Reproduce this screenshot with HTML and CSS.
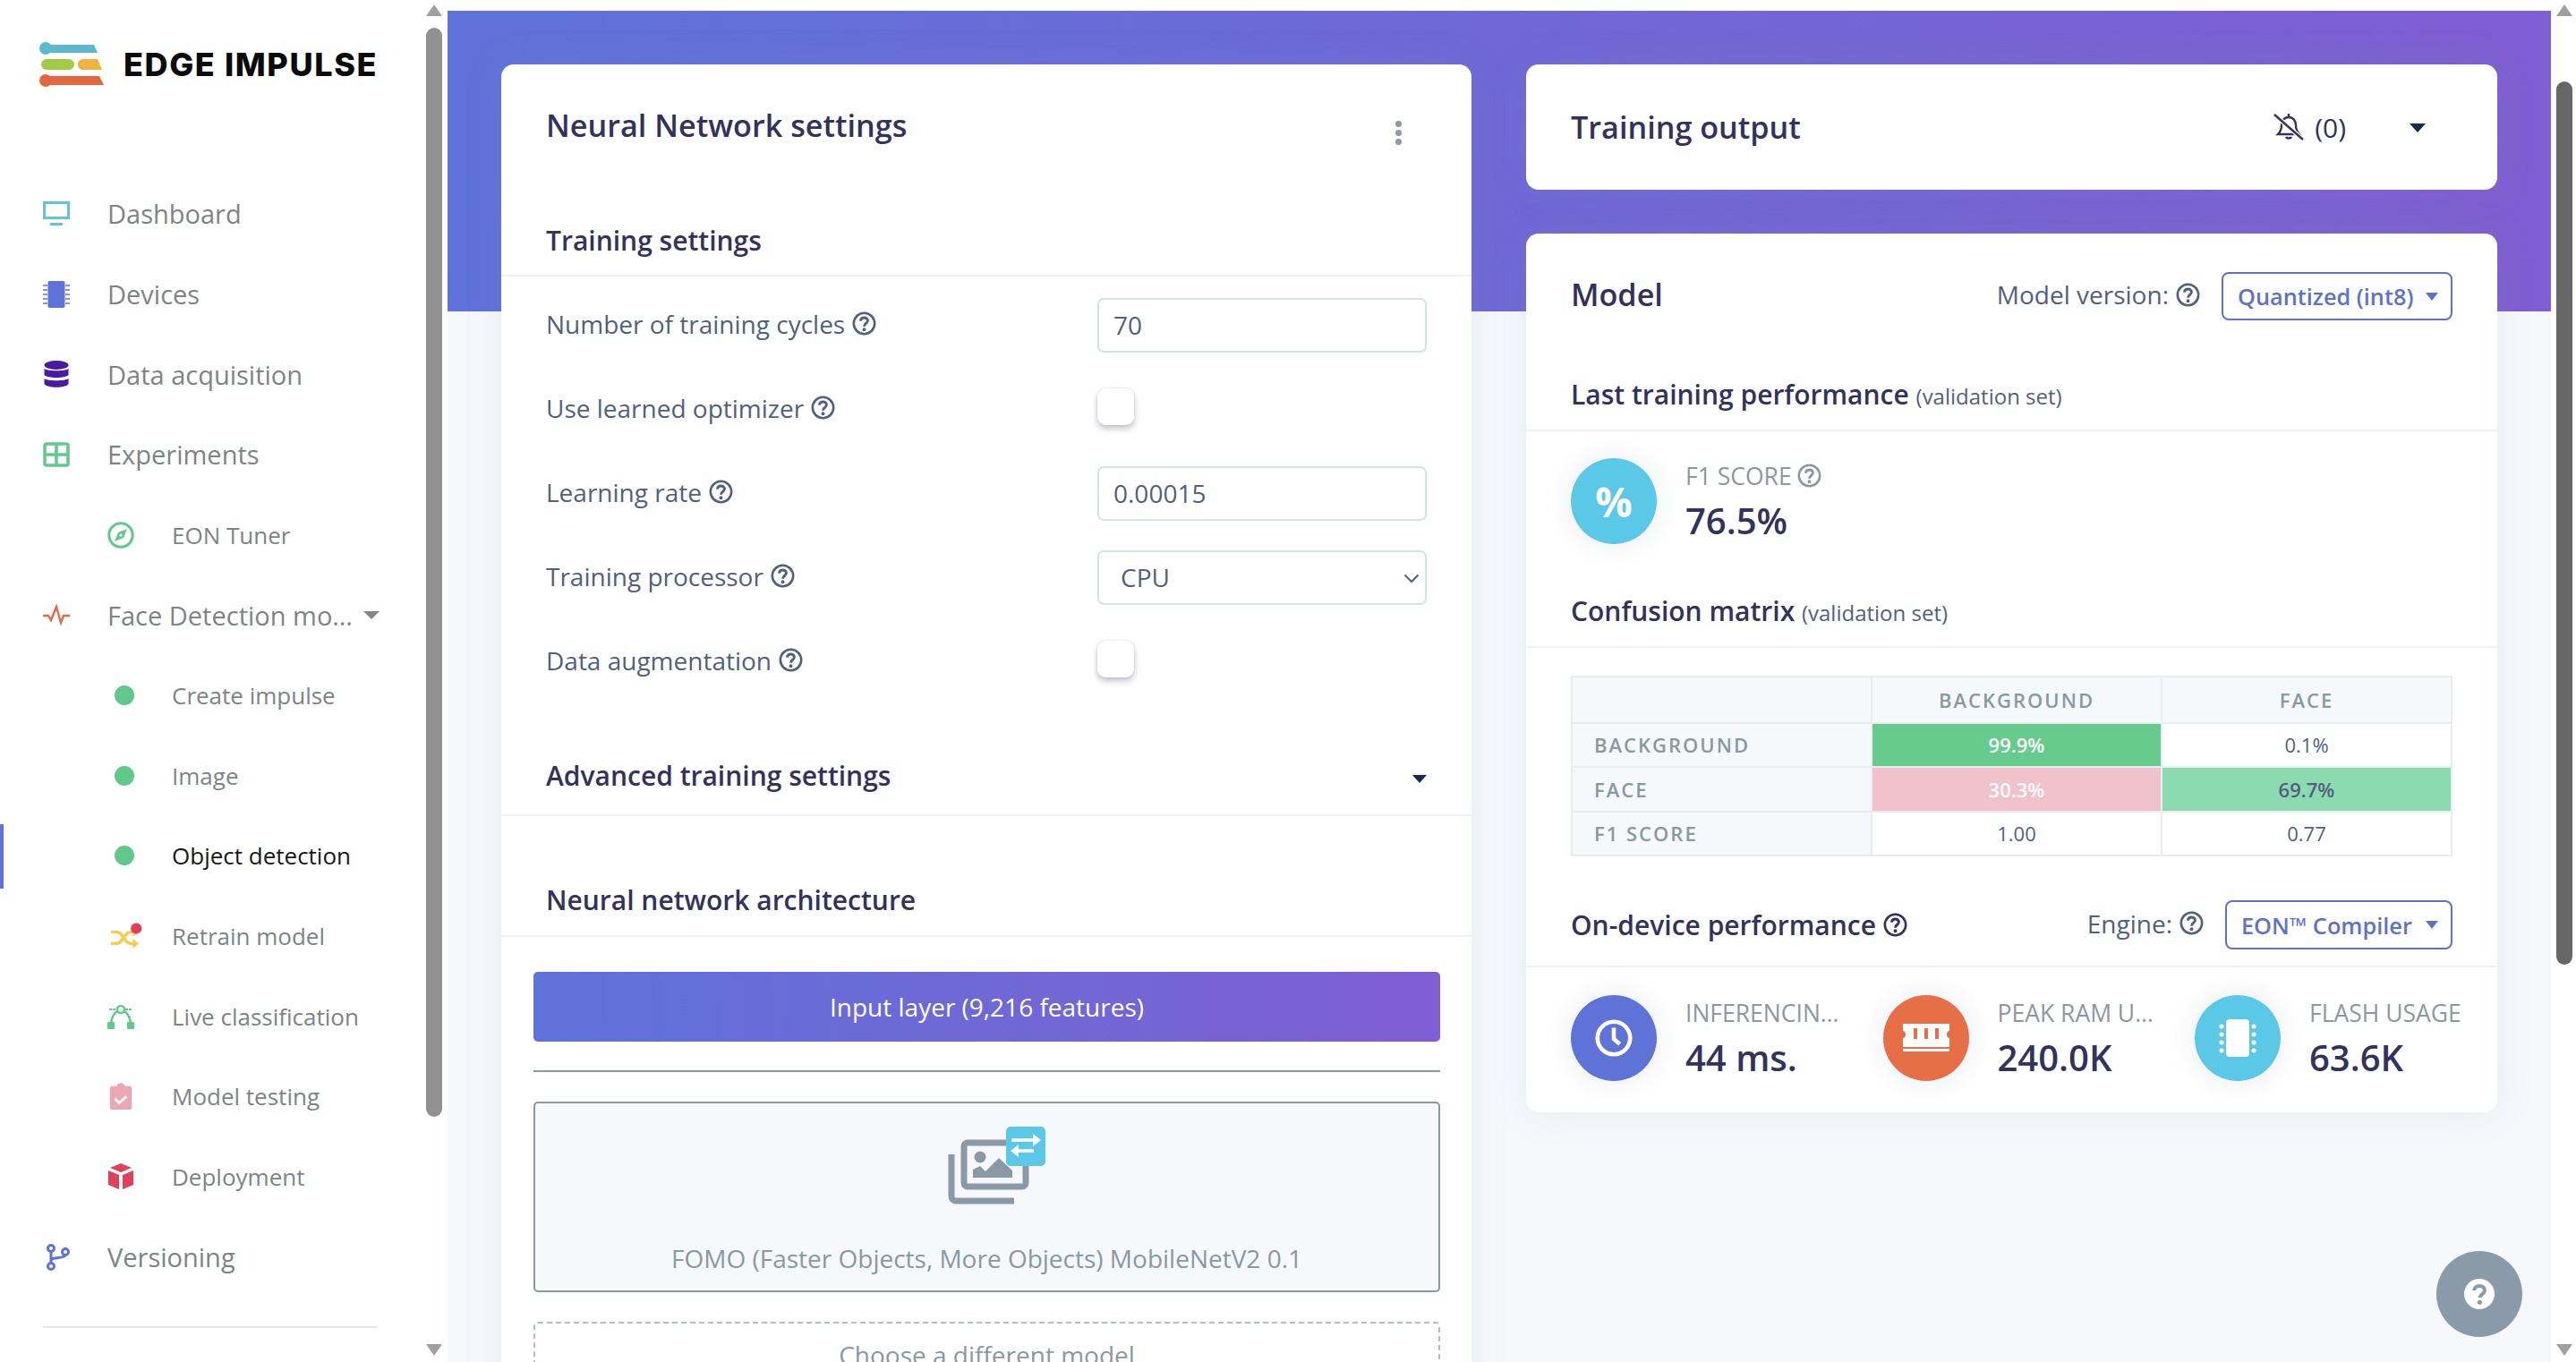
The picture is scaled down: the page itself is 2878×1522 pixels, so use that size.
FILE: index.html
```html
<!DOCTYPE html>
<html lang="en">
<head>
    <meta charset="UTF-8">
    <title>Edge Impulse - Object detection</title>
    <link rel="stylesheet" href="styles.css">
</head>
<body>
    <svg class="defs" width="0" height="0">
        <symbol id="help" viewBox="0 0 24 24">
            <circle cx="12" cy="12" r="10.4" fill="none" stroke="currentColor" stroke-width="2.300"/>
            <path d="M8.400 9.400c.2-2 1.700-3.200 3.600-3.200 2 0 3.500 1.300 3.500 3 0 2.800-3.500 2.800-3.500 5.600" fill="none" stroke="currentColor" stroke-width="2.600"/>
            <circle cx="12" cy="18" r="1.700" fill="currentColor"/>
        </symbol>
    </svg>

    <aside class="sidebar">
        <div class="side-content">
            <div class="logo">
                <svg class="logo-mark" width="74" height="50" viewBox="0 0 74 50">
                    <circle cx="7" cy="7" r="7" fill="#5cb8cd"/>
                    <path d="M7 3h54l4 9H7z" fill="#5cb8cd"/>
                    <rect x="2" y="19" width="37" height="12" rx="6" fill="#a3cb45"/>
                    <path d="M49 19h16l5 12H49c-3 0-6-2-6-6s3-6 6-6z" fill="#efb53f"/>
                    <circle cx="7" cy="43" r="7" fill="#e5673f"/>
                    <path d="M7 38h60l5 10H7z" fill="#e5673f"/>
                </svg>
                <span class="logo-text">EDGE IMPULSE</span>
            </div>
            <nav class="nav">
                <a class="nav-item">
                    <svg class="nav-icon" viewBox="0 0 30 28"><rect x="1.500" y="1.500" width="27" height="17" fill="none" stroke="#62c3de" stroke-width="3"/><rect x="8" y="24" width="14" height="3" fill="#62c3de"/></svg>
                    Dashboard
                </a>
                <a class="nav-item">
                    <svg class="nav-icon" viewBox="0 0 30 30"><rect x="5.500" y="0" width="19" height="30" rx="2" fill="#5f72d8"/><path d="M0 5h5M0 10h5M0 15h5M0 20h5M0 25h5M25 5h5M25 10h5M25 15h5M25 20h5M25 25h5" stroke="#5f72d8" stroke-width="1.600"/></svg>
                    Devices
                </a>
                <a class="nav-item">
                    <svg class="nav-icon" viewBox="0 0 30 30"><ellipse cx="15" cy="5" rx="13.500" ry="5" fill="#4a1ba0"/><path d="M1.500 9c3 3 24 3 27 0v7c-3 4-24 4-27 0zM1.500 20c3 3 24 3 27 0v6c-3 5-24 5-27 0z" fill="#4a1ba0"/></svg>
                    Data acquisition
                </a>
                <a class="nav-item">
                    <svg class="nav-icon" viewBox="0 0 30 28"><rect x="2" y="2" width="26" height="24" rx="2" fill="none" stroke="#62c98c" stroke-width="3.500"/><path d="M2 14h26M15 2v24" stroke="#62c98c" stroke-width="3.500"/></svg>
                    Experiments
                </a>
                <a class="nav-item nav-sub">
                    <svg class="nav-icon" viewBox="0 0 30 30"><circle cx="15" cy="15" r="13.200" fill="none" stroke="#62c98c" stroke-width="3"/><path d="M22 8l-4 10-10 4 4-10z" fill="#62c98c"/><circle cx="15" cy="15" r="1.600" fill="#fff"/></svg>
                    EON Tuner
                </a>
                <a class="nav-item">
                    <svg class="nav-icon" viewBox="0 0 30 24"><path d="M0 13h6l3 5 6-15 5 18 3-8h7" fill="none" stroke="#e4694a" stroke-width="2.400"/></svg>
                    <span class="nav-clip">Face Detection model</span>
                    <span class="caret caret-grey"></span>
                </a>
                <a class="nav-item nav-sub">
                    <span class="nav-dot"></span>
                    Create impulse
                </a>
                <a class="nav-item nav-sub">
                    <span class="nav-dot"></span>
                    Image
                </a>
                <a class="nav-item nav-sub active">
                    <span class="nav-dot"></span>
                    Object detection
                </a>
                <a class="nav-item nav-sub">
                    <svg class="nav-icon nav-icon-wide" viewBox="0 0 38 32">
                        <path d="M1 11h6c5 0 7 4 9 7s4 7 9 7h4M1 25h6c5 0 7-4 9-7s4-7 9-7h4" fill="none" stroke="#f0cf4b" stroke-width="3.600"/>
                        <path d="M27 5l7 6-7 6zM27 19l7 6-7 6z" fill="#f0cf4b"/>
                        <circle cx="31" cy="7" r="6.500" fill="#e2405a"/>
                    </svg>
                    Retrain model
                </a>
                <a class="nav-item nav-sub">
                    <svg class="nav-icon" viewBox="0 0 30 28">
                        <path d="M4 22C5 12 10 7 15 7s10 5 11 15" fill="none" stroke="#62c98c" stroke-width="2.600"/>
                        <path d="M2 6h8M20 6h8" stroke="#62c98c" stroke-width="1.800" stroke-dasharray="3 1"/>
                        <circle cx="15" cy="6" r="4" fill="#fff" stroke="#62c98c" stroke-width="2.400"/>
                        <rect x="0" y="20" width="8" height="8" rx="1" fill="#62c98c"/>
                        <rect x="22" y="20" width="8" height="8" rx="1" fill="#62c98c"/>
                    </svg>
                    Live classification
                </a>
                <a class="nav-item nav-sub">
                    <svg class="nav-icon" viewBox="0 0 30 32">
                        <path d="M5 4h5c1-5 9-5 10 0h5c2 0 3 1 3 3v22c0 2-1 3-3 3H5c-2 0-3-1-3-3V7c0-2 1-3 3-3z" fill="#eca7b5"/>
                        <path d="M8 19l5 5 9-8" fill="none" stroke="#fff" stroke-width="3"/>
                    </svg>
                    Model testing
                </a>
                <a class="nav-item nav-sub">
                    <svg class="nav-icon" viewBox="0 0 30 30">
                        <path d="M15 0l12 5-12 5L3 5z" fill="#e0405a"/>
                        <path d="M1 8l12 5v16L1 24zM29 8l-12 5v16l12-5z" fill="#e0405a"/>
                    </svg>
                    Deployment
                </a>
                <a class="nav-item">
                    <svg class="nav-icon" viewBox="0 0 30 30">
                        <g fill="none" stroke="#5f72d8" stroke-width="3">
                            <circle cx="9" cy="5" r="3.500"/><circle cx="9" cy="25" r="3.500"/><circle cx="25" cy="9" r="3.500"/>
                            <path d="M9 8.500v13M9 19c0-5 15-2 16-6.500"/>
                        </g>
                    </svg>
                    Versioning
                </a>
            </nav>
            <div class="side-divider"></div>
        </div>
        <div class="scrollbar scrollbar-left">
            <span class="arrow-up"></span>
            <span class="thumb"></span>
            <span class="arrow-down"></span>
        </div>
    </aside>

    <main class="main">
        <div class="columns">
            <section class="card card-settings">
                <div class="card-head">
                    <h2 class="card-title">Neural Network settings</h2>
                    <span class="dots"><i></i><i></i><i></i></span>
                </div>
                <h3 class="section-head">Training settings</h3>
                <div class="form-rows">
                    <div class="form-row">
                        <label class="form-label">Number of training cycles <svg class="help"><use href="#help"/></svg></label>
                        <input class="control" type="text" value="70">
                    </div>
                    <div class="form-row">
                        <label class="form-label">Use learned optimizer <svg class="help"><use href="#help"/></svg></label>
                        <div class="control-slot"><span class="checkbox"></span></div>
                    </div>
                    <div class="form-row">
                        <label class="form-label">Learning rate <svg class="help"><use href="#help"/></svg></label>
                        <input class="control" type="text" value="0.00015">
                    </div>
                    <div class="form-row">
                        <label class="form-label">Training processor <svg class="help"><use href="#help"/></svg></label>
                        <div class="select-wrap">
                            <select class="control control-select">
                                <option>CPU</option>
                            </select>
                            <svg class="chevron" width="18" height="11" viewBox="0 0 18 11"><path d="M1.500 1.500L9 9l7.500-7.500" fill="none" stroke="#525f7f" stroke-width="2"/></svg>
                        </div>
                    </div>
                    <div class="form-row">
                        <label class="form-label">Data augmentation <svg class="help"><use href="#help"/></svg></label>
                        <div class="control-slot"><span class="checkbox"></span></div>
                    </div>
                </div>
                <h3 class="section-head section-advanced">Advanced training settings <span class="caret caret-dark caret-low"></span></h3>
                <h3 class="section-head section-arch">Neural network architecture</h3>
                <div class="arch">
                    <div class="input-layer">Input layer (9,216 features)</div>
                    <div class="arch-line"></div>
                    <div class="model-box">
                        <svg class="model-icon" width="110" height="90" viewBox="0 0 110 90">
                            <path d="M5 33v47c0 3 2 5 5 5h65" fill="none" stroke="#8b98a5" stroke-width="7"/>
                            <rect x="19" y="20" width="69" height="49" rx="4" fill="#f6f9fc" stroke="#8b98a5" stroke-width="7"/>
                            <circle cx="37" cy="36" r="6.500" fill="#8b98a5"/>
                            <path d="M29 59V50l8-4 6 6 15-15 15 14v8z" fill="#8b98a5"/>
                            <rect x="66" y="2" width="44" height="44" rx="5" fill="#5bc8e8"/>
                            <path d="M72 17h25M97 29H78" stroke="#fff" stroke-width="3.500"/>
                            <path d="M96 10l9 7-9 7zM80 22l-9 7 9 7z" fill="#fff"/>
                        </svg>
                        <div class="model-name">FOMO (Faster Objects, More Objects) MobileNetV2 0.1</div>
                    </div>
                    <div class="choose-box">Choose a different model</div>
                </div>
            </section>

            <div class="right-col">
                <section class="card card-output">
                    <h2 class="card-title">Training output</h2>
                    <svg class="bell" width="34" height="30" viewBox="0 0 34 30" fill="none" stroke="#32325d" stroke-width="2.400">
                        <path d="M9 13c0-5 3-9 8-9s8 4 8 9c0 5 2 8 4 10H5c2-2 4-5 4-10z"/>
                        <path d="M14 26c.8 2 5.200 2 6 0"/>
                        <path d="M17 0v3"/>
                        <path d="M1 1l32 28" stroke="#fff" stroke-width="5"/>
                        <path d="M1 1l32 28"/>
                    </svg>
                    <span class="bell-count">(0)</span>
                    <span class="caret caret-dark caret-big"></span>
                </section>

                <section class="card card-model">
                    <div class="model-head">
                        <h2 class="card-title">Model</h2>
                        <span class="head-label">Model version: <svg class="help"><use href="#help"/></svg></span>
                        <span class="pick-btn pick-version">Quantized (int8) <span class="caret caret-blue"></span></span>
                    </div>
                    <h3 class="section-head section-perf">Last training performance <small>(validation set)</small></h3>
                    <div class="stat stat-f1">
                        <span class="stat-circle bg-blue"><span class="percent">%</span></span>
                        <div class="stat-text">
                            <div class="stat-label">F1 SCORE <svg class="help"><use href="#help"/></svg></div>
                            <div class="stat-value">76.5%</div>
                        </div>
                    </div>
                    <h3 class="section-head section-matrix">Confusion matrix <small>(validation set)</small></h3>
                    <table class="matrix">
                        <tr>
                            <th class="row-name"></th>
                            <th>BACKGROUND</th>
                            <th>FACE</th>
                        </tr>
                        <tr>
                            <th class="row-name">BACKGROUND</th>
                            <td class="cell-strong">99.9%</td>
                            <td>0.1%</td>
                        </tr>
                        <tr>
                            <th class="row-name">FACE</th>
                            <td class="cell-pink">30.3%</td>
                            <td class="cell-mid">69.7%</td>
                        </tr>
                        <tr>
                            <th class="row-name">F1 SCORE</th>
                            <td>1.00</td>
                            <td>0.77</td>
                        </tr>
                    </table>
                    <div class="section-head device-head">
                        <h3 class="device-title">On-device performance <svg class="help help-dark"><use href="#help"/></svg></h3>
                        <span class="head-label">Engine: <svg class="help"><use href="#help"/></svg></span>
                        <span class="pick-btn pick-engine">EON™ Compiler <span class="caret caret-blue"></span></span>
                    </div>
                    <div class="stats-row">
                        <div class="stat">
                            <span class="stat-circle bg-indigo">
                                <svg width="46" height="46" viewBox="0 0 24 24" fill="none" stroke="#fff" stroke-width="2.400"><circle cx="12" cy="12" r="9.500"/><path d="M12 6v6.500l3.500 3"/></svg>
                            </span>
                            <div class="stat-text">
                                <div class="stat-label stat-clip">INFERENCING TIME</div>
                                <div class="stat-value">44 ms.</div>
                            </div>
                        </div>
                        <div class="stat">
                            <span class="stat-circle bg-orange">
                                <svg width="52" height="36" viewBox="0 0 52 36" fill="#fff"><path d="M0 2h52v8c-2 0-3 2-3 4s1 4 3 4v10H0V18c2 0 3-2 3-4s-1-4-3-4z"/><path d="M12 7h4v12h-4zM24 7h4v12h-4zM36 7h4v12h-4z" fill="#e66f48"/><path d="M0 30h52v3H0z"/></svg>
                            </span>
                            <div class="stat-text">
                                <div class="stat-label stat-clip">PEAK RAM USAGE</div>
                                <div class="stat-value">240.0K</div>
                            </div>
                        </div>
                        <div class="stat">
                            <span class="stat-circle bg-blue">
                                <svg width="42" height="42" viewBox="0 0 42 42" fill="#fff"><rect x="8" y="0" width="26" height="42" rx="4"/><circle cx="3" cy="8" r="2.500"/><circle cx="3" cy="17" r="2.500"/><circle cx="3" cy="26" r="2.500"/><circle cx="3" cy="35" r="2.500"/><circle cx="39" cy="8" r="2.500"/><circle cx="39" cy="17" r="2.500"/><circle cx="39" cy="26" r="2.500"/><circle cx="39" cy="35" r="2.500"/></svg>
                            </span>
                            <div class="stat-text">
                                <div class="stat-label">FLASH USAGE</div>
                                <div class="stat-value">63.6K</div>
                            </div>
                        </div>
                    </div>
                </section>
            </div>
        </div>
        <button class="help-fab">
            <svg width="34" height="34" viewBox="0 0 24 24"><circle cx="12" cy="12" r="12" fill="#fff"/><path d="M7.800 9.300c.2-2.300 2-3.700 4.300-3.700 2.400 0 4.100 1.500 4.100 3.500 0 3-3.800 3.100-3.800 5.700" fill="none" stroke="#8a9aa8" stroke-width="2.800"/><circle cx="12.300" cy="18.500" r="1.800" fill="#8a9aa8"/></svg>
        </button>
    </main>

    <div class="scrollbar scrollbar-right">
        <span class="arrow-up"></span>
        <span class="thumb"></span>
        <span class="arrow-down"></span>
    </div>
</body>
</html>
```

FILE: styles.css
```css
* {
    box-sizing: border-box;
}
html, body {
    margin: 0;
    height: 1522px;
    overflow: hidden;
}
body {
    display: flex;
    font-family: "Open Sans", "Noto Sans", sans-serif;
    font-size: 28px;
    color: #525f7f;
    background-color: #fff;
}
.defs {
    position: absolute;
}
h2, h3 {
    margin: 0;
}

/* sidebar */
.sidebar {
    flex: 0 0 500px;
    display: flex;
    background-color: #fff;
}
.side-content {
    width: 476px;
    flex: none;
}
.logo {
    display: flex;
    align-items: center;
    height: 194px;
    padding: 0 0 50px 44px;
}
.logo-mark {
    flex: none;
}
.logo-text {
    margin-left: 20px;
    font-family: Inter, sans-serif;
    font-size: 36px;
    font-weight: 800;
    letter-spacing: 1.600px;
    color: #0b0b0b;
    white-space: nowrap;
}
.nav-item {
    position: relative;
    display: flex;
    align-items: center;
    height: 89.700px;
    padding-left: 48px;
    font-size: 29px;
    color: #7e8486;
    white-space: nowrap;
}
.nav-sub {
    padding-left: 120px;
    font-size: 26px;
}
.nav-sub.active {
    color: #16181a;
}
.nav-sub.active::before {
    content: "";
    position: absolute;
    left: 0;
    top: 9px;
    width: 4px;
    height: 72px;
    background-color: #5f72d8;
}
.nav-icon {
    flex: none;
    width: 30px;
    height: 30px;
    margin-right: 42px;
}
.nav-sub .nav-icon {
    margin-right: 42px;
}
.nav-sub .nav-icon-wide {
    width: 38px;
    margin-left: 2px;
    margin-right: 32px;
}
.nav-dot {
    flex: none;
    width: 22px;
    height: 22px;
    margin: 0 42px 0 8px;
    border-radius: 50%;
    background-color: #5fc98b;
}
.nav-clip {
    width: 284px;
    overflow: hidden;
    text-overflow: ellipsis;
}
.side-divider {
    height: 2px;
    margin: 32px 0 0 48px;
    width: 374px;
    background-color: #e6e9ee;
}
.caret {
    display: inline-block;
    width: 0;
    height: 0;
    border-left: 8px solid transparent;
    border-right: 8px solid transparent;
    border-top: 9px solid #172b4d;
}
.caret-grey {
    margin-left: 2px;
    border-left-width: 9px;
    border-right-width: 9px;
    border-top-color: #80868a;
}
.caret-dark {
    border-top-color: #172b4d;
}
.caret-low {
    margin-top: 6px;
}
.caret-big {
    margin-top: 2px;
    border-left-width: 9px;
    border-right-width: 9px;
    border-top-width: 10px;
}
.caret-blue {
    margin-left: 8px;
    border-left-width: 7px;
    border-right-width: 7px;
    border-top-color: #5f72c8;
}

/* scrollbars */
.scrollbar {
    display: flex;
    flex-direction: column;
    align-items: center;
    flex: none;
    height: 1522px;
    padding-top: 5px;
    padding-bottom: 7px;
}
.scrollbar-left {
    width: 18px;
}
.scrollbar-right {
    width: 28px;
    padding: 5px 4px 7px 6px;
}
.arrow-up, .arrow-down {
    width: 0;
    height: 0;
    border-left: 9px solid transparent;
    border-right: 9px solid transparent;
}
.arrow-up {
    border-bottom: 13px solid #a0a0a0;
}
.arrow-down {
    margin-top: auto;
    border-top: 13px solid #a0a0a0;
}
.thumb {
    width: 18px;
    border-radius: 9px;
    background-color: #919191;
}
.scrollbar-left .thumb {
    height: 1217px;
    margin-top: 13px;
}
.scrollbar-right .thumb {
    height: 987px;
    margin-top: 73px;
    background-color: #666;
}

/* main */
.main {
    position: relative;
    flex: 1;
    padding-top: 12px;
    background-color: #fff;
    overflow: hidden;
}
.columns {
    display: grid;
    grid-template-columns: 1084px 1085px;
    column-gap: 61px;
    height: 1510px;
    padding: 60px 0 0 60px;
    background: linear-gradient(87deg, #5f72da 0%, #7f5ed2 100%) top / 100% 336px no-repeat, #f6f8fc;
}
.card {
    background-color: #fff;
    border-radius: 14px;
    box-shadow: 0 0 40px rgba(136, 152, 170, 0.15);
}
.card-settings {
    height: 1500px;
}
.card-head {
    display: flex;
    justify-content: space-between;
    align-items: center;
    height: 136px;
    padding: 0 78px 0 50px;
}
.card-title {
    font-size: 34.200px;
    font-weight: 600;
    line-height: 46px;
    color: #32325d;
}
.dots {
    display: flex;
    flex-direction: column;
    gap: 3px;
    margin-top: 16px;
}
.dots i {
    width: 7px;
    height: 7px;
    border-radius: 50%;
    background-color: #8c9aa2;
}
.section-head {
    display: block;
    padding: 42px 50px 19px;
    font-size: 30px;
    font-weight: 600;
    line-height: 38px;
    color: #32325d;
    border-bottom: 2px solid #eef1f5;
}
.section-head small {
    font-size: 24px;
    font-weight: 400;
    color: #525f7f;
}
.form-rows {
    padding-top: 7px;
}
.form-row {
    display: flex;
    align-items: center;
    height: 94px;
    padding: 0 50px;
}
.form-label {
    flex: 1;
    display: flex;
    align-items: center;
    gap: 8px;
    margin-bottom: 3px;
}
.help {
    flex: none;
    width: 27px;
    height: 27px;
    color: #525f7f;
}
.help-dark {
    color: #32325d;
}
.control {
    width: 368px;
    height: 61px;
    padding: 0 16px;
    border: 2px solid #d3e3e6;
    border-radius: 7px;
    background-color: #fff;
    font-family: inherit;
    font-size: 28px;
    color: #525f7f;
}
.select-wrap {
    position: relative;
    display: flex;
    width: 368px;
}
.control-select {
    appearance: none;
    padding-left: 24px;
}
.chevron {
    position: absolute;
    right: 8px;
    top: 26px;
}
.control-slot {
    width: 368px;
}
.checkbox {
    display: block;
    width: 41px;
    height: 41px;
    margin: 0 0 6px 0;
    border-radius: 9px;
    background-color: #fff;
    box-shadow: 0 4px 7px rgba(50, 50, 93, 0.3), 0 0 2px rgba(50, 50, 93, 0.15);
}
.section-advanced {
    display: flex;
    justify-content: space-between;
    align-items: center;
    padding: 62px 50px 24px;
}
.section-arch {
    padding: 75px 50px 20px;
}
.arch {
    padding: 39px 35px 0 36px;
}
.input-layer {
    display: flex;
    justify-content: center;
    align-items: center;
    height: 78px;
    border-radius: 5px;
    background: linear-gradient(87deg, #5f72da 0%, #7f5ed2 100%);
    font-size: 28px;
    color: #fff;
}
.arch-line {
    height: 2px;
    margin: 32px 0 33px;
    background-color: #8b98a0;
}
.model-box {
    display: flex;
    flex-direction: column;
    align-items: center;
    height: 213px;
    padding-top: 24px;
    border: 2px solid #8b98a0;
    border-radius: 5px;
    background-color: #f6f9fc;
}
.model-icon {
    flex: none;
    margin-left: 20px;
}
.model-name {
    margin-top: 40px;
    line-height: 38px;
    color: #8b989f;
}
.choose-box {
    height: 160px;
    margin-top: 33px;
    padding-top: 16px;
    border: 2px dashed #b4bcc4;
    border-radius: 5px;
    text-align: center;
    line-height: 38px;
    color: #8b989f;
}

/* right column */
.card-output {
    display: flex;
    align-items: center;
    height: 140px;
    margin-bottom: 49px;
    padding: 0 80px 0 50px;
}
.card-output .card-title {
    flex: 1;
}
.bell {
    flex: none;
    margin-right: 12px;
}
.bell-count {
    margin-right: 71px;
    font-size: 30px;
    color: #32325d;
}
.card-model {
    height: 982px;
}
.model-head {
    display: flex;
    align-items: center;
    padding: 43px 50px 0;
}
.model-head .card-title {
    flex: 1;
    margin-bottom: 5px;
}
.head-label {
    display: flex;
    align-items: center;
    gap: 8px;
    margin-bottom: 4px;
    font-size: 28px;
    font-weight: 400;
    color: #525f7f;
}
.pick-btn {
    display: flex;
    justify-content: space-between;
    align-items: center;
    border: 2px solid #5f72c8;
    border-radius: 8px;
    font-size: 25.300px;
    font-weight: 600;
    color: #5f72c8;
    white-space: nowrap;
}
.pick-version {
    width: 258px;
    height: 54px;
    margin-left: 24px;
    padding: 0 14px 0 16px;
}
.pick-engine {
    width: 254px;
    height: 55px;
    margin-left: 24px;
    padding: 0 14px 0 16px;
}
.section-perf {
    padding: 64px 50px 18px;
}
.section-matrix {
    padding: 56px 50px 18px;
}
.stat {
    display: flex;
    align-items: center;
}
.stat-f1 {
    margin: 30px 0 0 50px;
}
.stat-circle {
    flex: none;
    display: flex;
    justify-content: center;
    align-items: center;
    width: 96px;
    height: 96px;
    margin-right: 32px;
    border-radius: 50%;
    box-shadow: 0 0 30px rgba(136, 152, 170, 0.2);
}
.bg-blue {
    background-color: #5bc8e8;
}
.bg-indigo {
    background-color: #5f72d8;
}
.bg-orange {
    background-color: #e66f48;
}
.percent {
    font-size: 46px;
    font-weight: 700;
    color: #fff;
}
.stat-label {
    display: flex;
    align-items: center;
    gap: 6px;
    font-size: 26.500px;
    font-weight: 400;
    line-height: 36px;
    color: #8b989f;
}
.stat-label .help {
    color: #8b989f;
}
.stat-clip {
    display: block;
    width: 184px;
    overflow: hidden;
    white-space: nowrap;
    text-overflow: ellipsis;
}
.stat-value {
    margin-top: 7px;
    font-size: 40px;
    font-weight: 600;
    line-height: 50px;
    color: #32325d;
}
.matrix {
    width: 985px;
    margin: 31px 0 0 50px;
    border-collapse: collapse;
    table-layout: fixed;
    font-size: 22px;
}
.matrix tr {
    height: 49.500px;
}
.matrix tr:first-child {
    height: 51.500px;
}
.matrix th, .matrix td {
    border: 2px solid #e9edf1;
    text-align: center;
    padding: 0;
}
.matrix th {
    font-size: 22px;
    font-weight: 600;
    letter-spacing: 2px;
    color: #8b989f;
    background-color: #f6f9fc;
}
.matrix .row-name {
    width: 335px;
    padding-left: 24px;
    text-align: left;
}
.matrix td {
    color: #525f7f;
}
.matrix .cell-strong {
    background-color: #66cb8c;
    font-weight: 600;
    color: #fff;
}
.matrix .cell-pink {
    background-color: #f0c2cc;
    font-weight: 600;
    color: #fff;
}
.matrix .cell-mid {
    background-color: #8cdaaf;
    font-weight: 600;
}
.device-head {
    display: flex;
    align-items: center;
    padding: 49px 50px 18px;
}
.device-title {
    flex: 1;
    display: flex;
    align-items: center;
    gap: 8px;
    font-size: 30px;
    font-weight: 600;
}
.stats-row {
    display: flex;
    margin: 31px 0 0 50px;
}
.stats-row .stat {
    flex: 0 0 348.500px;
}
.help-fab {
    position: absolute;
    right: 32px;
    top: 1398px;
    display: flex;
    justify-content: center;
    align-items: center;
    width: 96px;
    height: 96px;
    padding: 0;
    border: none;
    border-radius: 50%;
    background-color: #8a9aa8;
}
```
